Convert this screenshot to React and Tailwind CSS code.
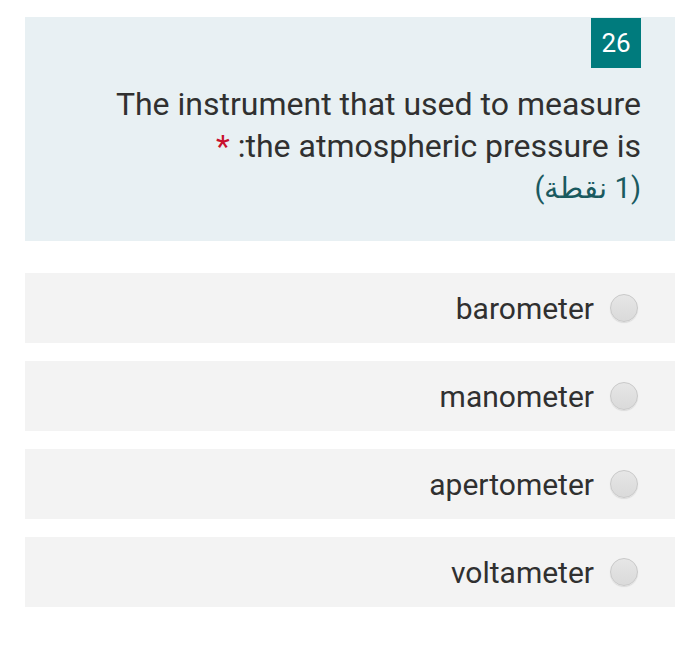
import React from 'react';

const options = ['barometer', 'manometer', 'apertometer', 'voltameter'];

const App = () => {
  return (
    <div className="w-[700px] h-[658px] bg-white pt-[17px] px-[25px]" style={{ fontFamily: 'Roboto, "Noto Sans", sans-serif' }}>
      <div className="bg-[#e8f0f3] h-[224px] pr-[34px] pt-px" dir="rtl">
        <div className="w-[50px] h-[50px] bg-[#007b7d] text-white text-[26px] flex items-center justify-center">
          26
        </div>
        <div className="mt-[15px] text-[32px] leading-[42px] text-[#303030]">
          <p dir="ltr" className="text-right">The instrument that used to measure</p>
          <p dir="ltr" className="text-right">
            <span className="text-[#c8102e]">*</span> :the atmospheric pressure is
          </p>
          <p dir="rtl" className="text-right text-[29px] text-[#1a5a5f]">(1 نقطة)</p>
        </div>
      </div>

      <div className="mt-[32px] flex flex-col gap-[18px]">
        {options.map(opt => (
          <div key={opt} className="bg-[#f3f3f3] h-[70px] flex items-center justify-end pr-[37px] gap-[16px]">
            <span className="text-[30px] text-[#303030]">{opt}</span>
            <span className="w-[28px] h-[28px] rounded-full border border-[#c9c9c9] bg-gradient-to-b from-[#e6e6e6] to-[#dadada] shadow-[0_1px_1px_rgba(0,0,0,0.1)]" />
          </div>
        ))}
      </div>
    </div>
  );
};

export default App;
